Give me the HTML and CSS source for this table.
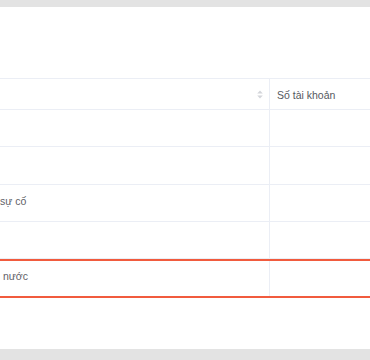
FILE: index.html
```html
<!DOCTYPE html>
<html lang="vi">
<head>
<meta charset="utf-8">
<title>Danh sách</title>
<link rel="stylesheet" href="styles.css">
</head>
<body>
<div class="page">
  <div class="panel">
    <div class="table">
      <div class="row head">
        <div class="cell first">
          <span class="sorter">
            <svg width="6" height="9" viewBox="0 0 6 9"><path d="M3 0.5 L5.8 3.6 H0.2 Z" fill="#d3d5da"/><path d="M3 8.5 L5.8 5.4 H0.2 Z" fill="#d3d5da"/></svg>
          </span>
        </div>
        <div class="cell second">Số tài khoản</div>
      </div>
      <div class="row r37"><div class="cell first"></div><div class="cell second"></div></div>
      <div class="row r38"><div class="cell first"></div><div class="cell second"></div></div>
      <div class="row r37"><div class="cell first body-text">sự cố</div><div class="cell second"></div></div>
      <div class="row r37"><div class="cell first"></div><div class="cell second"></div></div>
      <div class="row selected"><div class="cell first body-text indent">nước</div><div class="cell second"></div></div>
    </div>
  </div>
</div>
</body>
</html>
```

FILE: styles.css
```css
html, body {
  margin: 0;
  padding: 0;
}

body {
  background: #e3e3e3;
  font-family: "Liberation Sans", Arial, sans-serif;
  font-size: 10.5px;
  color: #5f6167;
}

.page {
  padding-top: 7px;
}

.panel {
  background: #ffffff;
  height: 342px;
  box-sizing: border-box;
  padding-top: 71px;
  overflow: hidden;
}

.table {
  display: flex;
  flex-direction: column;
}

.row {
  display: grid;
  grid-template-columns: 270px 1fr;
  box-sizing: border-box;
  border-bottom: 1px solid #ebeef5;
}

.row.head {
  height: 32px;
  border-top: 1px solid #ebeef5;
}

.row.r37 { height: 37px; }
.row.r38 { height: 38px; }

.row.selected {
  height: 39px;
  border-top: 2px solid #f15b3e;
  border-bottom: 2px solid #f15b3e;
}

.cell {
  display: flex;
  align-items: center;
  box-sizing: border-box;
}

.cell.first {
  border-right: 1px solid #ebeef5;
}

.head .cell.first {
  justify-content: flex-end;
  padding-right: 6px;
}

.head .cell.second {
  padding-left: 7px;
  padding-top: 2px;
  color: #55585e;
}

.body-text {
  padding-bottom: 5px;
}

.indent {
  padding-left: 3px;
}

.sorter {
  display: flex;
  padding-top: 1px;
}
```
